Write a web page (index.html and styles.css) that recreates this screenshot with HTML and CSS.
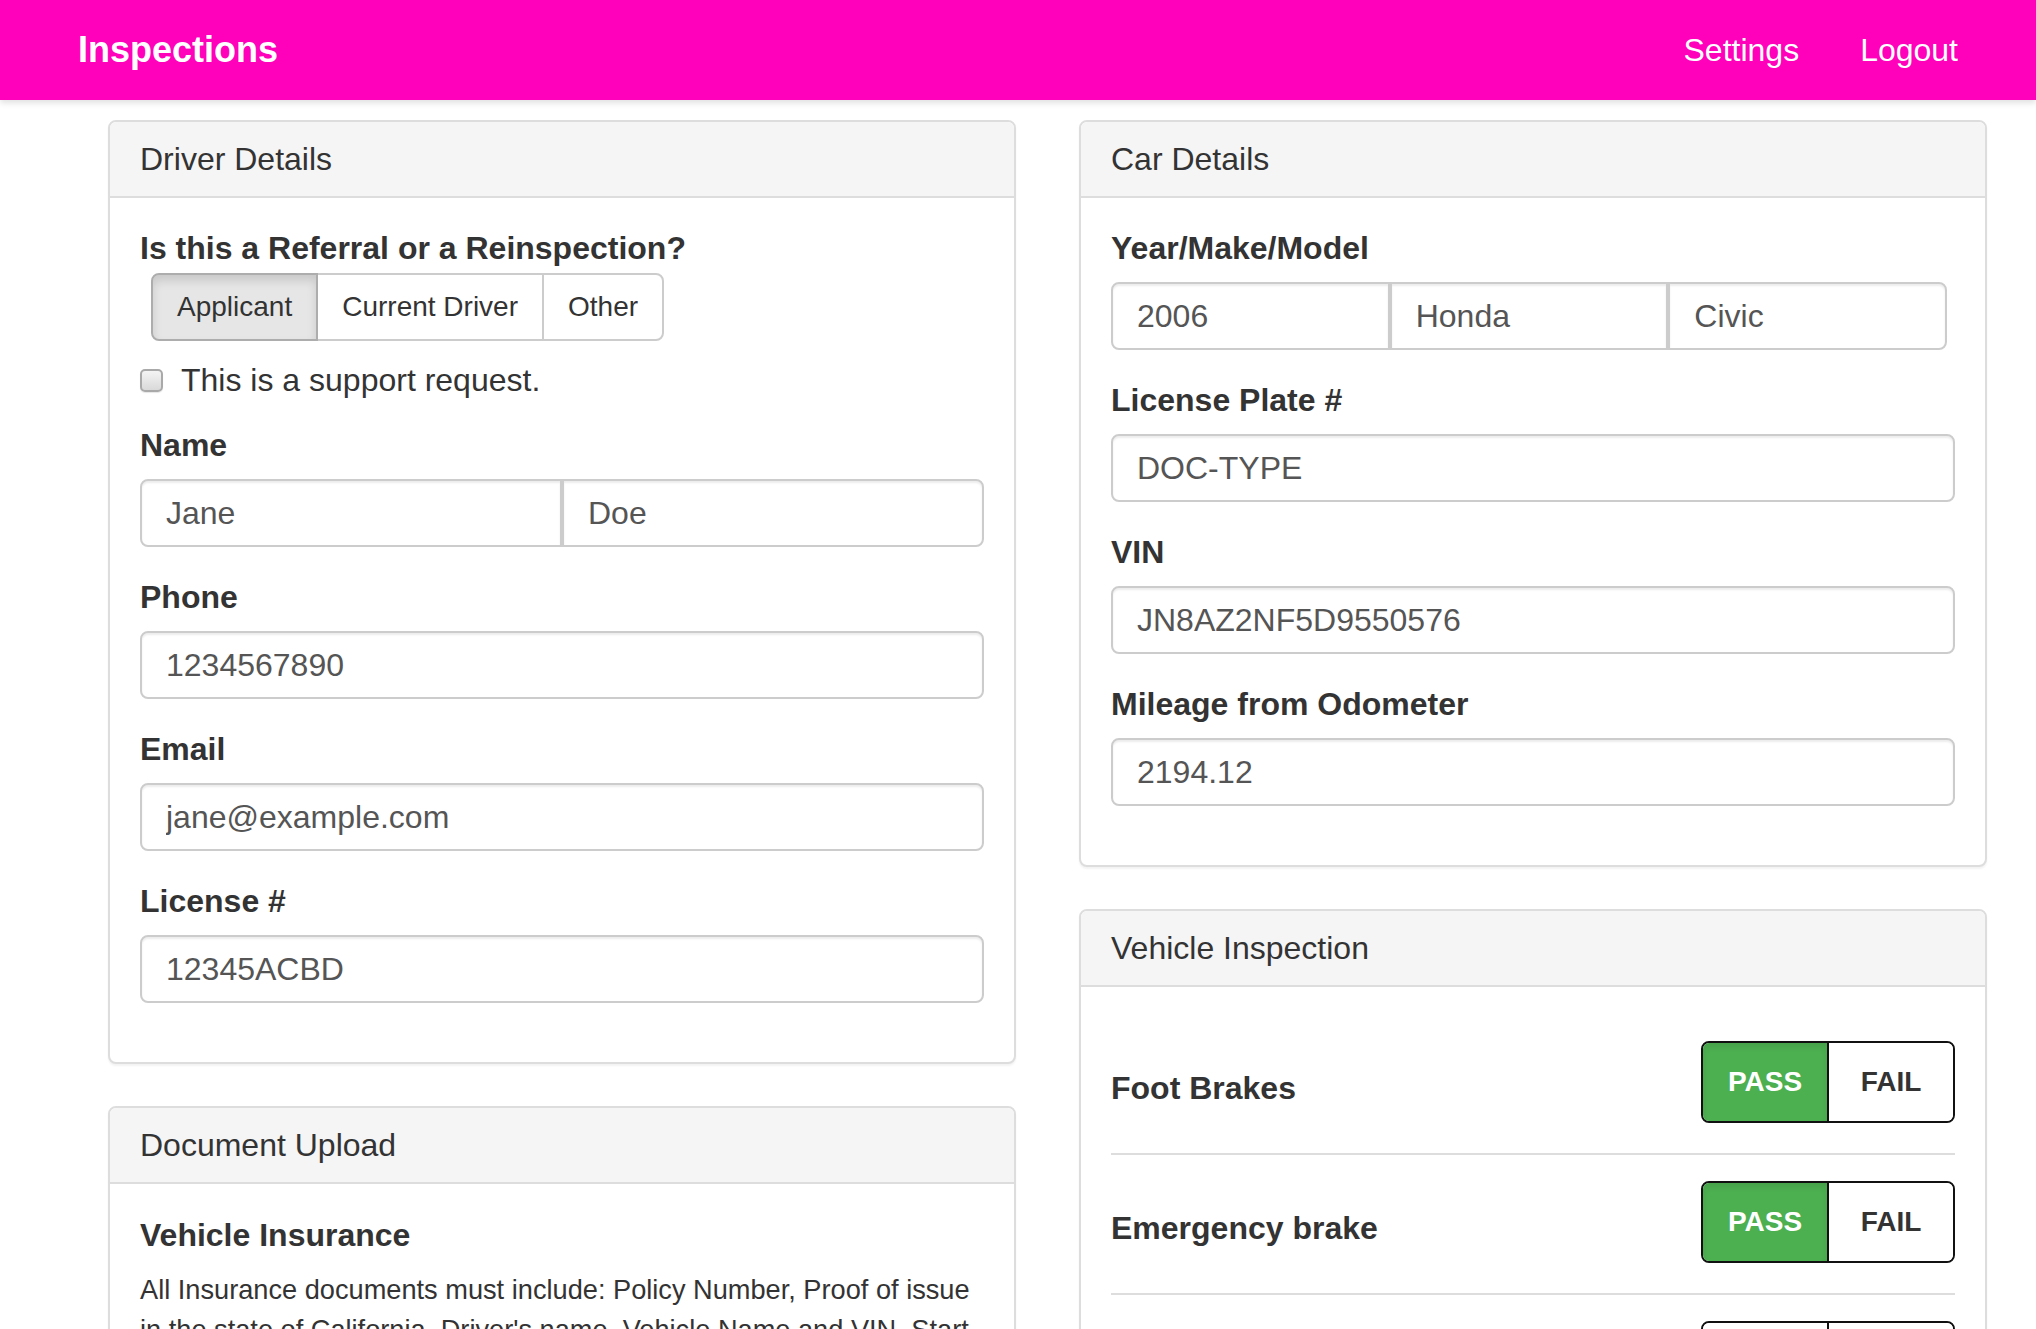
FILE: index.html
```html
<!DOCTYPE html>
<html>
<head>
<meta charset="utf-8">
<title>Inspections</title>
<link rel="stylesheet" href="styles.css">
</head>
<body>
<header class="navbar">
  <div class="brand">Inspections</div>
  <nav class="nav-links">
    <a href="#">Settings</a>
    <a href="#">Logout</a>
  </nav>
</header>

<main class="page">
  <div class="column">
    <section class="panel">
      <div class="panel-heading">Driver Details</div>
      <div class="panel-body">
        <div class="group group-tight">
          <label class="label label-radio">Is this a Referral or a Reinspection?</label>
          <div class="btn-group">
            <button class="btn active">Applicant</button>
            <button class="btn">Current Driver</button>
            <button class="btn">Other</button>
          </div>
        </div>
        <div class="checkbox-row">
          <input type="checkbox" class="check">
          <span>This is a support request.</span>
        </div>
        <div class="group">
          <label class="label">Name</label>
          <div class="input-row">
            <input class="field" value="Jane">
            <input class="field" value="Doe">
          </div>
        </div>
        <div class="group">
          <label class="label">Phone</label>
          <input class="field single" value="1234567890">
        </div>
        <div class="group">
          <label class="label">Email</label>
          <input class="field single" value="jane@example.com">
        </div>
        <div class="group">
          <label class="label">License #</label>
          <input class="field single" value="12345ACBD">
        </div>
      </div>
    </section>

    <section class="panel">
      <div class="panel-heading">Document Upload</div>
      <div class="panel-body">
        <h4 class="doc-title">Vehicle Insurance</h4>
        <p class="doc-text">All Insurance documents must include: Policy Number, Proof of issue in the state of California, Driver's name, Vehicle Name and VIN. Start date and Expiration date must be clearly visible.</p>
      </div>
    </section>
  </div>

  <div class="column">
    <section class="panel">
      <div class="panel-heading">Car Details</div>
      <div class="panel-body">
        <div class="group">
          <label class="label">Year/Make/Model</label>
          <div class="input-row narrow">
            <input class="field" value="2006">
            <input class="field" value="Honda">
            <input class="field" value="Civic">
          </div>
        </div>
        <div class="group">
          <label class="label">License Plate #</label>
          <input class="field single" value="DOC-TYPE">
        </div>
        <div class="group">
          <label class="label">VIN</label>
          <input class="field single" value="JN8AZ2NF5D9550576">
        </div>
        <div class="group">
          <label class="label">Mileage from Odometer</label>
          <input class="field single" value="2194.12">
        </div>
      </div>
    </section>

    <section class="panel">
      <div class="panel-heading">Vehicle Inspection</div>
      <div class="panel-body">
        <div class="check-item">
          <span class="item-label">Foot Brakes</span>
          <div class="toggle">
            <button class="toggle-btn pass selected">PASS</button>
            <button class="toggle-btn fail">FAIL</button>
          </div>
        </div>
        <div class="check-item">
          <span class="item-label">Emergency brake</span>
          <div class="toggle">
            <button class="toggle-btn pass selected">PASS</button>
            <button class="toggle-btn fail">FAIL</button>
          </div>
        </div>
        <div class="check-item">
          <span class="item-label">Headlights</span>
          <div class="toggle">
            <button class="toggle-btn pass">PASS</button>
            <button class="toggle-btn fail">FAIL</button>
          </div>
        </div>
      </div>
    </section>
  </div>
</main>
</body>
</html>
```

FILE: styles.css
```css
* {
  box-sizing: border-box;
}

html, body {
  margin: 0;
  padding: 0;
  background: #ffffff;
}

body {
  font-family: "Liberation Sans", Arial, Helvetica, sans-serif;
  color: #333333;
  font-size: 32px;
  overflow: hidden;
}

/* Navbar */
.navbar {
  height: 100px;
  background: #ff00bb;
  display: flex;
  align-items: center;
  justify-content: space-between;
  padding: 0 78px;
  box-shadow: 0 3px 6px rgba(0, 0, 0, 0.12);
  position: relative;
  z-index: 2;
}

.brand {
  color: #ffffff;
  font-weight: bold;
  font-size: 36px;
  line-height: 40px;
}

.nav-links {
  display: flex;
  gap: 61px;
}

.nav-links a {
  color: #ffffff;
  text-decoration: none;
  font-size: 32px;
  line-height: 40px;
}

/* Page grid */
.page {
  display: grid;
  grid-template-columns: 908px 908px;
  column-gap: 63px;
  padding: 20px 0 0 108px;
  align-items: start;
}

.column {
  display: flex;
  flex-direction: column;
  gap: 42px;
}

/* Panels */
.panel {
  border: 2px solid #dddddd;
  border-radius: 8px;
  background: #ffffff;
  box-shadow: 0 2px 2px rgba(0, 0, 0, 0.05);
  overflow: hidden;
}

.panel-heading {
  background: #f5f5f5;
  border-bottom: 2px solid #dddddd;
  padding: 20px 30px;
  font-size: 32px;
  line-height: 34px;
  color: #333333;
}

.panel-body {
  padding: 28px 30px 31px;
}

/* Form groups */
.group {
  margin-bottom: 28px;
}

.group-tight {
  margin-bottom: 0;
}

.label {
  display: block;
  font-weight: bold;
  font-size: 32px;
  line-height: 44px;
  margin-bottom: 12px;
  color: #333333;
}

.label-radio {
  margin-bottom: 3px;
}

/* Button group */
.btn-group {
  display: inline-flex;
  margin-left: 11px;
}

.btn {
  font-family: "Liberation Sans", Arial, Helvetica, sans-serif;
  font-size: 28px;
  line-height: 40px;
  padding: 12px 24px;
  background: #ffffff;
  color: #333333;
  border: 2px solid #cccccc;
  margin: 0;
  margin-left: -2px;
  border-radius: 0;
}

.btn:first-child {
  margin-left: 0;
  border-radius: 8px 0 0 8px;
}

.btn:last-child {
  border-radius: 0 8px 8px 0;
}

.btn.active {
  background: #e6e6e6;
  border-color: #adadad;
  box-shadow: inset 0 6px 10px rgba(0, 0, 0, 0.125);
  position: relative;
  z-index: 1;
}

/* Checkbox */
.checkbox-row {
  display: flex;
  align-items: center;
  gap: 18px;
  margin-top: 16px;
  margin-bottom: 20px;
  line-height: 46px;
  font-size: 32px;
}

.check {
  appearance: none;
  -webkit-appearance: none;
  width: 23px;
  height: 23px;
  margin: 0;
  border: 2px solid #a9a9a9;
  border-radius: 5px;
  background: linear-gradient(#f4f4f4, #d9d9d9);
  box-shadow: 0 1px 1px rgba(0, 0, 0, 0.1);
}

/* Inputs */
.field {
  font-family: "Liberation Sans", Arial, Helvetica, sans-serif;
  font-size: 32px;
  color: #555555;
  height: 68px;
  padding: 0 24px;
  border: 2px solid #cccccc;
  border-radius: 8px;
  background: #ffffff;
  box-shadow: inset 0 2px 2px rgba(0, 0, 0, 0.075);
  outline: none;
  margin: 0;
}

.field.single {
  display: block;
  width: 100%;
}

.input-row {
  display: flex;
  width: 100%;
}

.input-row.narrow {
  width: calc(100% - 8px);
}

.input-row .field {
  flex: 1 1 0;
  min-width: 0;
  border-radius: 0;
}

.input-row .field:first-child {
  border-radius: 8px 0 0 8px;
}

.input-row .field:last-child {
  border-radius: 0 8px 8px 0;
}

/* Document upload */
.doc-title {
  margin: 0 0 12px;
  font-size: 32px;
  line-height: 46px;
  font-weight: bold;
  color: #333333;
}

.doc-text {
  margin: 0;
  font-size: 27.2px;
  line-height: 40px;
  color: #333333;
}

/* Vehicle inspection */
.check-item {
  display: flex;
  align-items: center;
  justify-content: space-between;
  padding: 26px 0 30px;
  border-bottom: 2px solid #dddddd;
}

.item-label {
  font-weight: bold;
  font-size: 32px;
  line-height: 44px;
  padding-top: 11px;
  color: #333333;
}

.toggle {
  display: flex;
  width: 254px;
  height: 82px;
  border: 2px solid #111111;
  border-radius: 8px;
  overflow: hidden;
}

.toggle-btn {
  flex: 1 1 0;
  font-family: "Liberation Sans", Arial, Helvetica, sans-serif;
  font-weight: bold;
  font-size: 28px;
  border: none;
  margin: 0;
  padding: 0;
  background: #ffffff;
  color: #333333;
}

.toggle-btn.pass {
  border-right: 2px solid #111111;
}

.toggle-btn.selected {
  background: #4caf50;
  color: #ffffff;
  box-shadow: inset 0 4px 6px rgba(0, 0, 0, 0.08);
}
```
